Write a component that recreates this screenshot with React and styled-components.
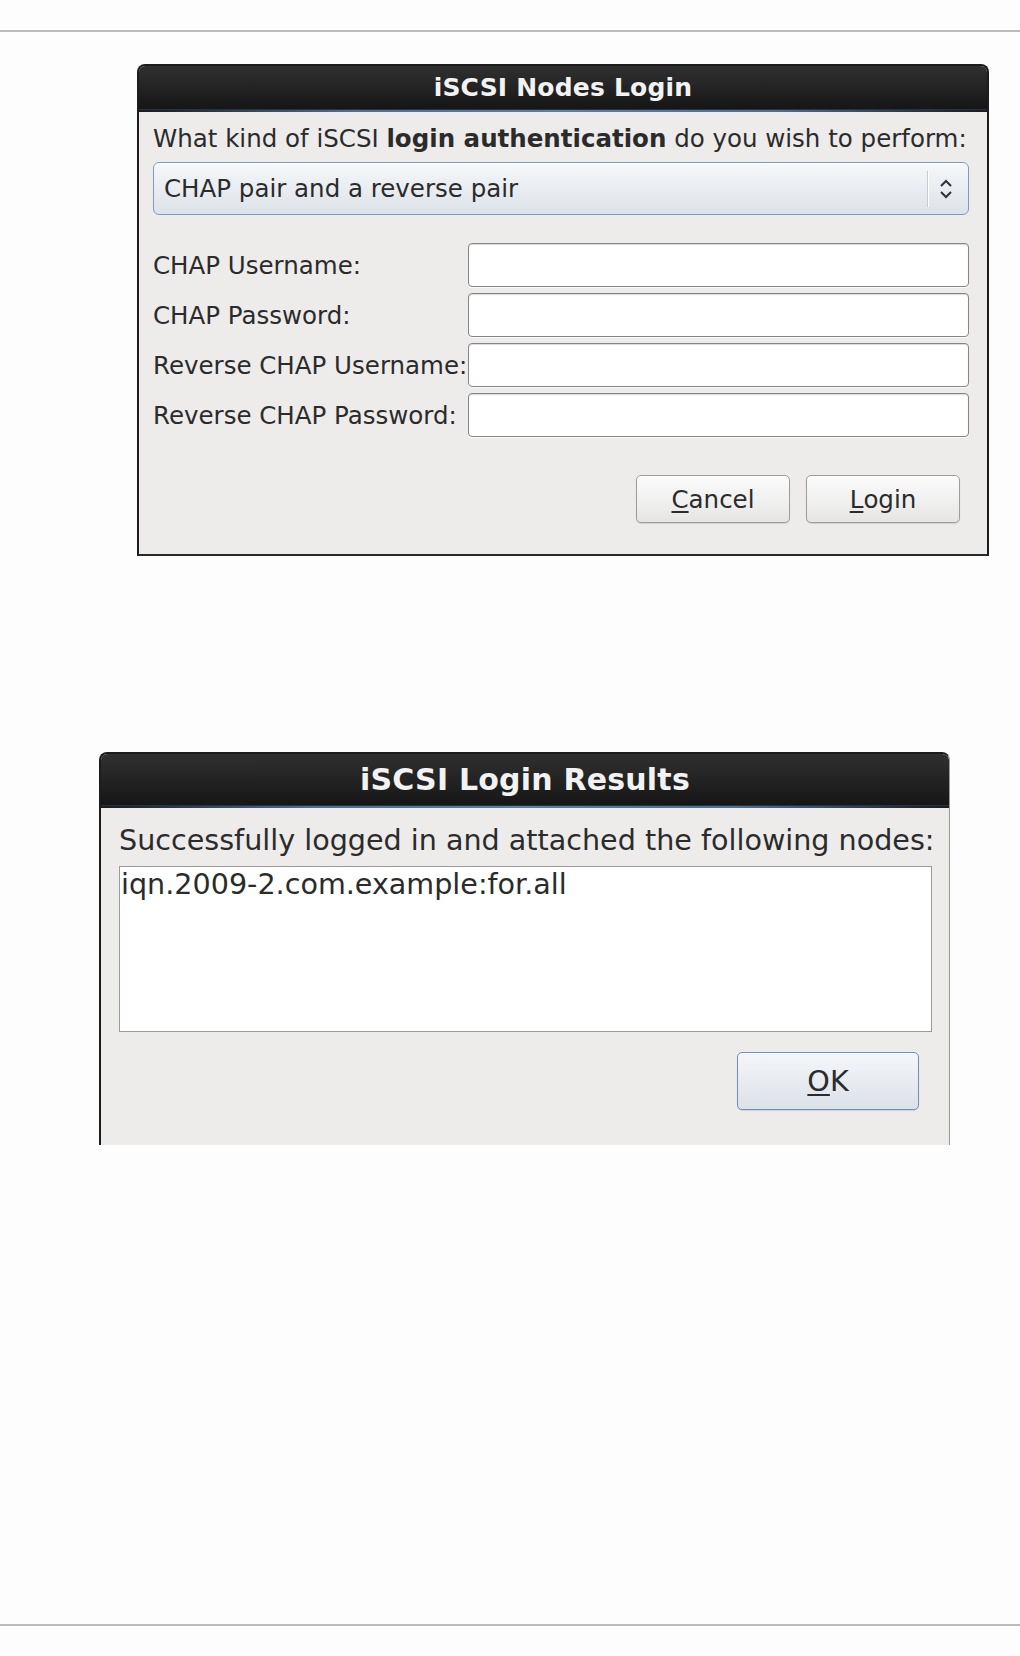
import React from 'react'
import styled, { createGlobalStyle } from 'styled-components'

const GlobalStyle = createGlobalStyle`
  body {
    margin: 0;
    background: #fdfdfd;
    font-family: "DejaVu Sans", "Liberation Sans", sans-serif;
    color: #2b2b2b;
  }
`

export default function App () {
  return (
    <Page>
      <GlobalStyle />
      <Rule />

      <Dialog $left={137} $width={852} $top={32} $closed>
        <TitleBar $height={43}>
          <Title $size={25}>iSCSI Nodes Login</Title>
        </TitleBar>
        <Glow />
        <Body $pad="11px 18px 31px 14px" $size={24.5}>
          <Question>
            What kind of iSCSI <b>login authentication</b> do you wish to perform:
          </Question>
          <Select>
            <SelectText>CHAP pair and a reverse pair</SelectText>
            <SelectDivider />
            <Chevrons />
          </Select>
          <FormGrid>
            <Label>CHAP Username:</Label>
            <Field />
            <Label>CHAP Password:</Label>
            <Field />
            <Label>Reverse CHAP Username:</Label>
            <Field />
            <Label>Reverse CHAP Password:</Label>
            <Field />
          </FormGrid>
          <ButtonRow $top={38} $right={9}>
            <Button><u>C</u>ancel</Button>
            <Button><u>L</u>ogin</Button>
          </ButtonRow>
        </Body>
      </Dialog>

      <Dialog $left={99} $width={851} $top={196}>
        <TitleBar $height={51}>
          <Title $size={30}>iSCSI Login Results</Title>
        </TitleBar>
        <Glow />
        <Body $pad="15px 17px 35px 18px" $size={28.6}>
          <Message>Successfully logged in and attached the following nodes:</Message>
          <NodeList>iqn.2009-2.com.example:for.all</NodeList>
          <ButtonRow $top={20} $right={13}>
            <Button $default $width={182} $height={58}><u>O</u>K</Button>
          </ButtonRow>
        </Body>
      </Dialog>

      <Rule $top={479} />
    </Page>
  )
}

function Chevrons () {
  return (
    <ChevronIcon width="18" height="28" viewBox="0 0 18 28">
      <path d="M4 11 L9 6 L14 11" fill="none" stroke="#2e3436" strokeWidth="2" />
      <path d="M4 17 L9 22 L14 17" fill="none" stroke="#2e3436" strokeWidth="2" />
    </ChevronIcon>
  )
}

const Page = styled.div`
  display: flex;
  flex-direction: column;
  padding-top: 30px;
  height: 1656px;
  box-sizing: border-box;
`

const Rule = styled.div`
  height: 2px;
  margin-top: ${p => p.$top || 0}px;
  background: #bcbcbc;
`

const Dialog = styled.div`
  display: flex;
  flex-direction: column;
  margin-top: ${p => p.$top}px;
  margin-left: ${p => p.$left}px;
  width: ${p => p.$width}px;
  box-sizing: border-box;
  border: 2px solid #1c1c1c;
  border-right: ${p => p.$closed ? '2px solid #1c1c1c' : '1px solid #9a9a9a'};
  border-bottom: ${p => p.$closed ? '2px solid #2a2a2a' : 'none'};
  border-radius: 8px 8px 0 0;
  background: #edeceb;
  overflow: hidden;
`

const TitleBar = styled.div`
  height: ${p => p.$height}px;
  display: flex;
  align-items: center;
  justify-content: center;
  background: linear-gradient(#303030, #222222 55%, #161616);
`

const Title = styled.div`
  color: #f2f2f2;
  font-weight: bold;
  font-size: ${p => p.$size}px;
  letter-spacing: 0.2px;
`

const Glow = styled.div`
  height: 3px;
  background: linear-gradient(90deg, #1a1a1a, #4d6f96 25%, #5a7ea8 50%, #4d6f96 75%, #1a1a1a);
  box-shadow: inset 0 1px 0 #253445;
`

const Body = styled.div`
  display: flex;
  flex-direction: column;
  padding: ${p => p.$pad};
  font-size: ${p => p.$size}px;
`

const Question = styled.div`
  line-height: 32px;
  margin-bottom: 7px;
  white-space: nowrap;
`

const Select = styled.div`
  height: 53px;
  box-sizing: border-box;
  display: flex;
  align-items: center;
  border: 1px solid #7b9bc6;
  border-radius: 6px;
  background: linear-gradient(#f6f8fa, #e9edf1 50%, #dde2e8);
  box-shadow: inset 0 1px 0 #fff;
  padding: 0 13px 0 10px;
`

const SelectText = styled.span`
  flex: 1;
`

const SelectDivider = styled.span`
  width: 1px;
  height: 36px;
  background: #c6cbd2;
  box-shadow: 1px 0 0 #fff;
  margin-right: 9px;
`

const ChevronIcon = styled.svg`
  display: block;
`

const FormGrid = styled.div`
  display: grid;
  grid-template-columns: 315px 1fr;
  grid-auto-rows: 44px;
  row-gap: 6px;
  margin-top: 28px;
  align-items: center;
`

const Label = styled.div`
  white-space: nowrap;
`

const Field = styled.div`
  height: 44px;
  box-sizing: border-box;
  background: #fff;
  border: 1px solid #858585;
  border-radius: 4px;
  box-shadow: inset 0 1px 1px rgba(0, 0, 0, 0.15), 0 1px 0 #fafafa;
`

const ButtonRow = styled.div`
  display: flex;
  justify-content: flex-end;
  gap: 16px;
  margin-top: ${p => p.$top}px;
  padding-right: ${p => p.$right}px;
`

const Button = styled.div`
  width: ${p => p.$width || 154}px;
  height: ${p => p.$height || 48}px;
  box-sizing: border-box;
  display: flex;
  align-items: center;
  justify-content: center;
  border: 1px solid ${p => p.$default ? '#6f90bd' : '#9c9c9c'};
  border-radius: 5px;
  background: ${p => p.$default
    ? 'linear-gradient(#f4f6f9, #e8ecf1 50%, #dce1e8)'
    : 'linear-gradient(#fbfbfb, #f1f1f0 50%, #e6e5e4)'};
  box-shadow: inset 0 1px 0 #fff, 0 1px 1px rgba(0, 0, 0, 0.12);
  color: #2b2b2b;

  u {
    text-decoration-thickness: 2px;
    text-underline-offset: 3px;
  }
`

const Message = styled.div`
  line-height: 34px;
  white-space: nowrap;
`

const NodeList = styled.div`
  height: 166px;
  box-sizing: border-box;
  margin-top: 9px;
  background: #fff;
  border: 1px solid #9a9a9a;
  padding-left: 1px;
  line-height: 34px;
`
